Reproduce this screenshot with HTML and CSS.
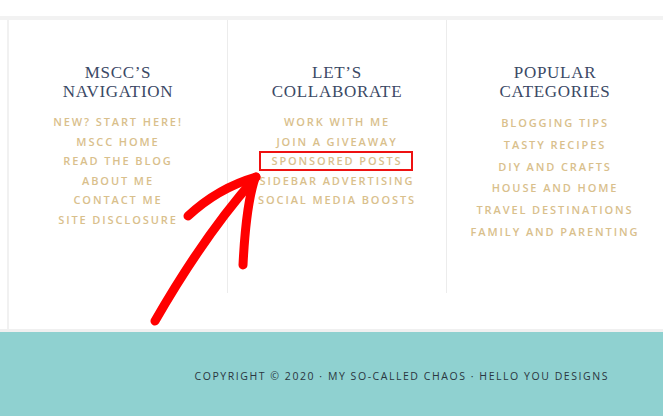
FILE: index.html
```html
<!DOCTYPE html>
<html>
<head>
<meta charset="utf-8">
<link rel="stylesheet" href="styles.css">
</head>
<body>
<div class="page">
  <div class="topbar"></div>
  <div class="band"></div>
  <div class="main">
    <div class="widgets">
      <section class="col">
        <h3 class="title">MSCC’S<br>NAVIGATION</h3>
        <ul class="links">
          <li>NEW? START HERE!</li>
          <li>MSCC HOME</li>
          <li>READ THE BLOG</li>
          <li>ABOUT ME</li>
          <li>CONTACT ME</li>
          <li>SITE DISCLOSURE</li>
        </ul>
      </section>
      <section class="col">
        <h3 class="title">LET’S<br>COLLABORATE</h3>
        <ul class="links">
          <li>WORK WITH ME</li>
          <li>JOIN A GIVEAWAY</li>
          <li><span class="marked">SPONSORED POSTS</span></li>
          <li>SIDEBAR ADVERTISING</li>
          <li>SOCIAL MEDIA BOOSTS</li>
        </ul>
      </section>
      <section class="col last">
        <h3 class="title">POPULAR<br>CATEGORIES</h3>
        <ul class="links wide">
          <li>BLOGGING TIPS</li>
          <li>TASTY RECIPES</li>
          <li>DIY AND CRAFTS</li>
          <li>HOUSE AND HOME</li>
          <li>TRAVEL DESTINATIONS</li>
          <li>FAMILY AND PARENTING</li>
        </ul>
      </section>
    </div>
  </div>
  <div class="footband"></div>
  <footer class="footer">
    <p class="copy">COPYRIGHT © 2020 · MY SO-CALLED CHAOS · HELLO YOU DESIGNS</p>
  </footer>
  <svg class="arrow" width="663" height="416" viewBox="0 0 663 416">
    <path d="M155 321 Q 205 234 256 177" />
    <path d="M188 216 Q 218 188 256 177" />
    <path d="M255 178 Q 246 205 243 265" />
  </svg>
</div>
</body>
</html>
```

FILE: styles.css
```css
html, body {
  margin: 0;
  padding: 0;
  background: #ffffff;
}

.page {
  position: relative;
  width: 663px;
  height: 416px;
  overflow: hidden;
}

.topbar {
  height: 16px;
  background: #ffffff;
}

.band {
  height: 4px;
  background: #f2f2f2;
}

.main {
  margin-left: 7px;
  border-left: 2px solid #f1f1f1;
  height: 309px;
}

.widgets {
  display: flex;
  height: 273px;
}

.col {
  width: 218px;
  border-right: 1px solid #ececec;
  padding-top: 43px;
  text-align: center;
}

.col.last {
  flex: 1;
  border-right: none;
}

.title {
  margin: 0;
  font-family: "Liberation Serif", "DejaVu Serif", serif;
  font-weight: normal;
  font-size: 17px;
  line-height: 19px;
  letter-spacing: 0.7px;
  color: #3b4965;
}

.links {
  list-style: none;
  margin: 11px 0 0;
  padding: 0;
  font-family: "Open Sans", "Liberation Sans", sans-serif;
  font-weight: 600;
  font-size: 11px;
  line-height: 19.6px;
  letter-spacing: 1.9px;
  color: #d9c08c;
}

.links.wide {
  line-height: 21.8px;
}

.marked {
  position: relative;
}

.marked::after {
  content: "";
  position: absolute;
  left: -12px;
  right: -10px;
  top: -2px;
  bottom: -3px;
  border: 2px solid #ee1111;
}

.footband {
  height: 3px;
  background: #f0f0f0;
}

.footer {
  height: 84px;
  background: #8fd1d0;
  display: flex;
  align-items: center;
  justify-content: flex-end;
  padding-top: 4px;
  box-sizing: border-box;
  padding-right: 54px;
}

.copy {
  margin: 0;
  font-family: "Open Sans", "Liberation Sans", sans-serif;
  font-weight: 500;
  font-size: 10.5px;
  line-height: 15px;
  letter-spacing: 1.55px;
  color: #2a3640;
}

.arrow {
  position: absolute;
  left: 0;
  top: 0;
  pointer-events: none;
}

.arrow path {
  fill: none;
  stroke: #ff0000;
  stroke-width: 9;
  stroke-linecap: round;
  stroke-linejoin: round;
}
```
